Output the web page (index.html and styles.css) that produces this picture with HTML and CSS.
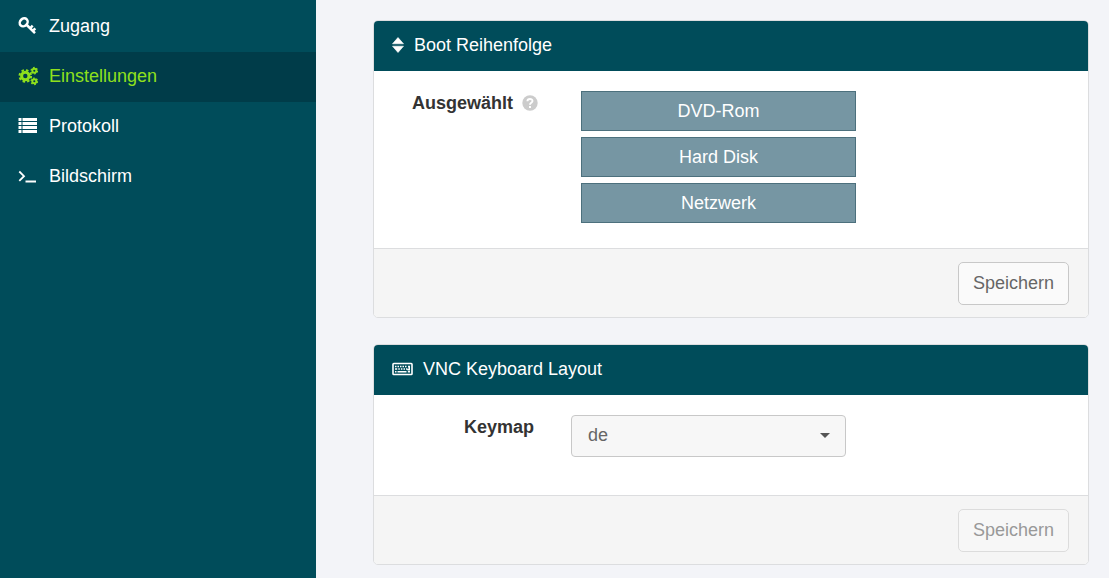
FILE: index.html
```html
<!DOCTYPE html>
<html lang="de">
<head>
<meta charset="utf-8">
<meta name="viewport" content="width=device-width, initial-scale=1">
<title>Einstellungen</title>
<link rel="stylesheet" href="styles.css">
</head>
<body>
<div class="layout">
  <nav class="sidebar">
    <a class="nav-item" href="#zugang">
      <svg class="nav-icon" viewBox="0 0 20 20" aria-hidden="true">
        <ellipse cx="5.700" cy="6.300" rx="4.300" ry="3.600" transform="rotate(-45 5.700 6.300)" fill="none" stroke="currentColor" stroke-width="2.500"/>
        <path d="M8.300 8.500 17 17.200M12.200 12.200l2.500-2.500M14.800 14.800l2.500-2.500" fill="none" stroke="currentColor" stroke-width="2.500"/>
      </svg>
      <span>Zugang</span>
    </a>
    <a class="nav-item nav-item-active" href="#einstellungen" aria-current="page">
      <svg class="nav-icon" viewBox="0 0 20 20" aria-hidden="true">
        <g fill="none" stroke="currentColor">
          <circle cx="7.300" cy="10" r="3.700" stroke-width="3"/>
          <circle cx="7.300" cy="10" r="5.800" stroke-width="2" stroke-dasharray="2.500 2.055"/>
          <circle cx="16.300" cy="4.700" r="2" stroke-width="1.900"/>
          <circle cx="16.300" cy="4.700" r="3.200" stroke-width="1.300" stroke-dasharray="1.700 1.651"/>
          <circle cx="16.300" cy="15.300" r="2" stroke-width="1.900"/>
          <circle cx="16.300" cy="15.300" r="3.200" stroke-width="1.300" stroke-dasharray="1.700 1.651"/>
        </g>
      </svg>
      <span>Einstellungen</span>
    </a>
    <a class="nav-item" href="#protokoll">
      <svg class="nav-icon" viewBox="0 0 20 20" aria-hidden="true">
        <path d="M.500 2h3v3H.500zM4.500 2H19v3H4.500zM.500 6h3v3H.500zM4.500 6H19v3H4.500zM.500 10h3v3H.500zM4.500 10H19v3H4.500zM.500 14h3v3H.500zM4.500 14H19v3H4.500z" fill="currentColor"/>
      </svg>
      <span>Protokoll</span>
    </a>
    <a class="nav-item" href="#bildschirm">
      <svg class="nav-icon" viewBox="0 0 20 20" aria-hidden="true">
        <path d="M1.300 5.500 6 10.200 1.300 14.900M7.500 15.500H18" fill="none" stroke="currentColor" stroke-width="1.800"/>
      </svg>
      <span>Bildschirm</span>
    </a>
  </nav>

  <main class="content">
    <form class="panel">
      <h2 class="panel-header">
        <svg class="sort-icon" viewBox="0 0 12 16" aria-hidden="true">
          <path d="M6 .500 11.500 6.800H.500zM.500 9.200h11L6 15.500z" fill="currentColor" stroke="currentColor" stroke-width=".6" stroke-linejoin="round"/>
        </svg>
        <span>Boot Reihenfolge</span>
      </h2>
      <div class="panel-body">
        <div class="field-label" id="boot-label">
          <span>Ausgewählt</span>
          <svg class="help-icon" viewBox="0 0 16 16" aria-hidden="true">
            <circle cx="8" cy="8" r="7.700" fill="currentColor"/>
            <path d="M5.400 6.200C5.500 3.200 10.600 3.300 10.500 6.100 10.500 7.800 8 7.900 8 9.700" fill="none" stroke="#fff" stroke-width="1.900"/>
            <path d="M7 11h2v2H7z" fill="#fff"/>
          </svg>
        </div>
        <ul class="boot-list" aria-labelledby="boot-label">
          <li class="boot-item">DVD-Rom</li>
          <li class="boot-item">Hard Disk</li>
          <li class="boot-item">Netzwerk</li>
        </ul>
      </div>
      <div class="panel-footer">
        <button class="button" type="button">Speichern</button>
      </div>
    </form>

    <form class="panel">
      <h2 class="panel-header">
        <svg class="keyboard-icon" viewBox="0 0 21 14" aria-hidden="true">
          <rect x="1" y="1.500" width="19" height="11" rx=".8" fill="none" stroke="currentColor" stroke-width="1.600"/>
          <path d="M3 4.500h1.500M5.500 4.500H7M8 4.500h1.500M10.500 4.500H12M13 4.500h1.500M16 4.500h2M3 7h2.200M6.300 7h1.500M8.900 7h1.500M11.500 7H13M14 7h1.500M17.200 4v3.700H15.500M3 9.800h1.500M5.500 9.800h9M15.800 9.800H18" fill="none" stroke="currentColor" stroke-width="1.600"/>
        </svg>
        <span>VNC Keyboard Layout</span>
      </h2>
      <div class="panel-body panel-body-keymap">
        <label class="field-label" for="keymap">Keymap</label>
        <div class="select-wrap">
          <select class="select" id="keymap">
            <option>de</option>
          </select>
          <svg class="select-caret" viewBox="0 0 10 5" aria-hidden="true"><path d="M0 0h10L5 5z" fill="currentColor"/></svg>
        </div>
      </div>
      <div class="panel-footer">
        <button class="button" type="button" disabled>Speichern</button>
      </div>
    </form>
  </main>
</div>
</body>
</html>
```
FILE: styles.css
```css
* {
  box-sizing: border-box;
}

body {
  margin: 0;
  background: #f3f4f8;
  color: #333;
  font-family: "Liberation Sans", Arial, sans-serif;
  font-size: 18px;
  line-height: 24px;
}

.layout {
  display: flex;
  min-height: 100vh;
}

.sidebar {
  flex: 0 0 316px;
  padding-top: 2px;
  background: #004c5a;
}

.nav-item {
  display: flex;
  align-items: center;
  gap: 11px;
  padding: 12px 18px 14px;
  color: #fff;
  text-decoration: none;
}

.nav-item-active {
  background: #003c49;
  color: #8fe01c;
}

.nav-icon {
  width: 20px;
  height: 20px;
}

.content {
  flex: 1;
  min-width: 0;
  padding: 20px 20px 13px 57px;
}

.panel {
  margin-bottom: 26px;
  border: 1px solid #dcdddf;
  border-radius: 5px;
  background: #fff;
  overflow: hidden;
}

.panel:last-child {
  margin-bottom: 0;
}

.panel-header {
  display: flex;
  align-items: center;
  gap: 10px;
  margin: 0;
  padding: 12px 18px 14px;
  background: #004c5a;
  color: #fff;
  font-size: 18px;
  font-weight: 400;
}

.sort-icon {
  width: 12px;
  height: 16px;
}

.keyboard-icon {
  width: 21px;
  height: 14px;
}

.panel-body {
  display: grid;
  grid-template-columns: 164px minmax(0, 275px);
  column-gap: 43px;
  align-items: start;
  padding: 20px 20px 25px 0;
}

.panel-body-keymap {
  grid-template-columns: 160px minmax(0, 275px);
  column-gap: 37px;
  padding-bottom: 38px;
}

.field-label {
  display: flex;
  align-items: center;
  justify-content: flex-end;
  gap: 9px;
  font-weight: 700;
}

.help-icon {
  width: 16px;
  height: 16px;
  color: #ccc;
}

.boot-list {
  display: grid;
  gap: 6px;
  margin: 0;
  padding: 0;
  list-style: none;
}

.boot-item {
  padding: 7px 16px;
  border: 1px solid #4c707d;
  background: #7696a3;
  color: #fff;
  text-align: center;
}

.select-wrap {
  position: relative;
}

.select {
  display: block;
  width: 100%;
  padding: 7px 40px 9px 16px;
  border: 1px solid #c8c8c8;
  border-radius: 4px;
  background: #f7f7f7;
  color: #666;
  font: inherit;
  appearance: none;
}

.select-caret {
  position: absolute;
  top: 18px;
  right: 16px;
  width: 10px;
  height: 5px;
  color: #555;
  pointer-events: none;
}

.panel-footer {
  display: flex;
  justify-content: flex-end;
  padding: 13px 19px 12px;
  border-top: 1px solid #dcdddf;
  background: #f5f5f5;
}

.button {
  padding: 8px 14px 9px;
  border: 1px solid #c8c8c8;
  border-radius: 5px;
  background: #fafafa;
  color: #666;
  font: inherit;
}

.button:disabled {
  border-color: #dcdcdc;
  background: #f7f7f7;
  color: #999;
}
```
